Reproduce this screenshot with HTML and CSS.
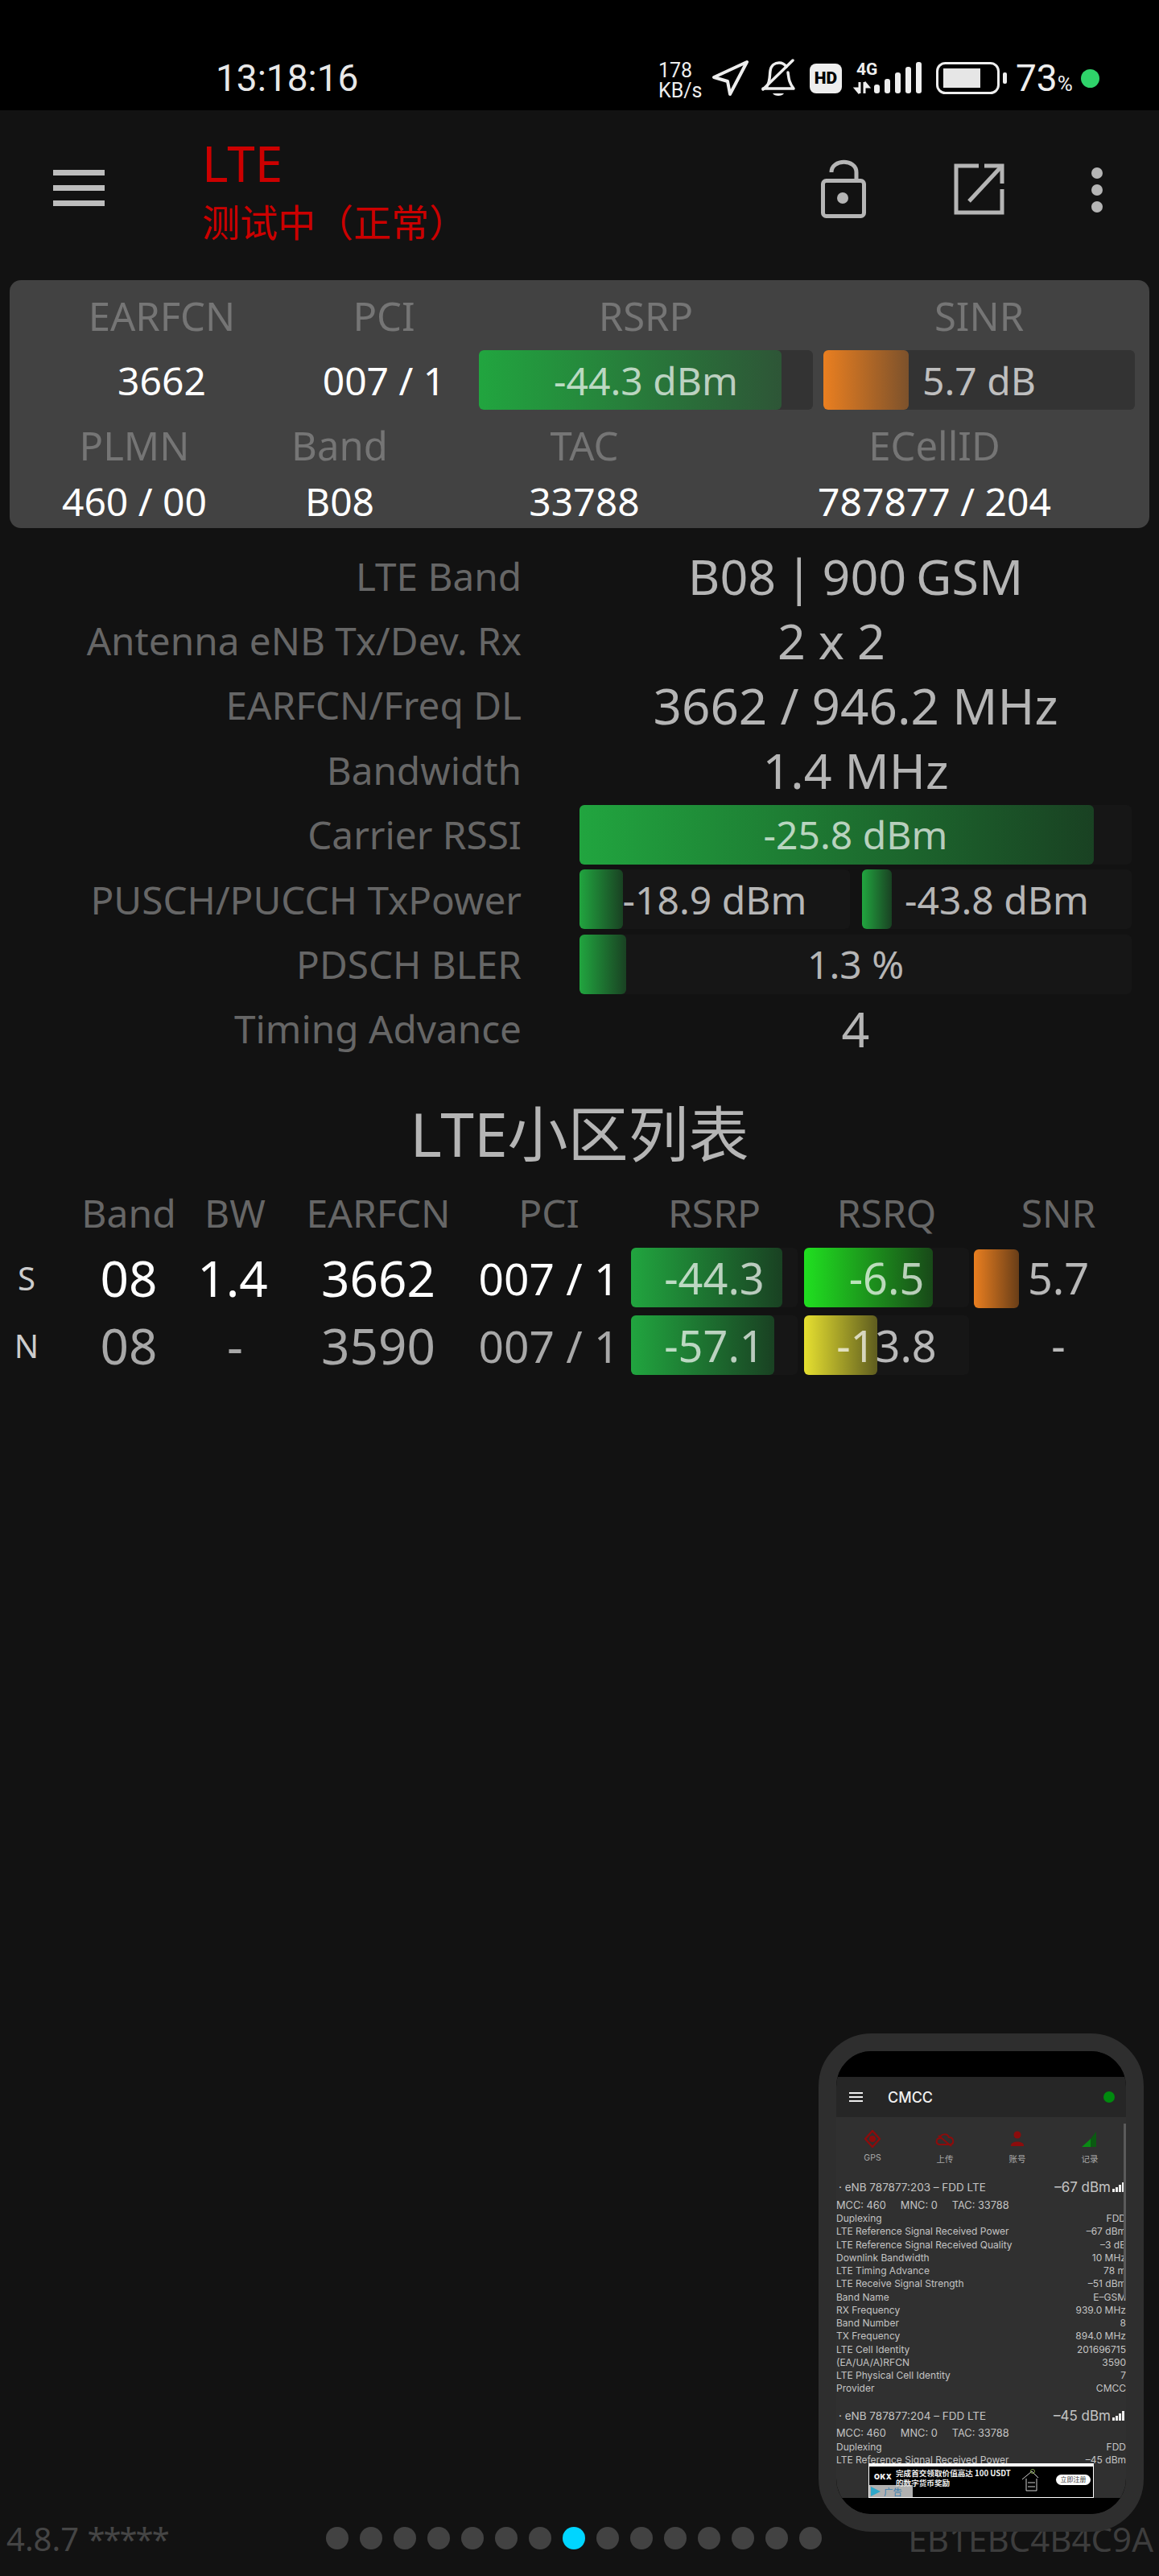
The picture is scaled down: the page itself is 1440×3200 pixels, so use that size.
FILE: index.html
```html
<!DOCTYPE html>
<html>

<head>
    <meta charset="utf-8">
    <title>LTE</title>
    <link rel="stylesheet" href="styles.css">
</head>

<body>
    <div class="page">
        <!-- status bar -->
        <div class="statusbar">
            <span class="clock">13:18:16</span>
            <div class="speed"><span>178</span><span>KB/s</span></div>
            <svg class="st-nav" width="46" height="46" viewBox="0 0 46 46">
                <path d="M44 3 L3 22 L20 27 L23 43 Z" fill="none" stroke="#eee" stroke-width="4" stroke-linejoin="round" />
            </svg>
            <svg class="st-bell" width="44" height="48" viewBox="0 0 44 48">
                <path d="M8 34 C12 28 11 22 12 15 C13 8 18 5 23 5 C27 5 30 7 32 10 M34 17 C35 24 35 29 41 37 H3" fill="none" stroke="#eee" stroke-width="3.5" stroke-linecap="round" stroke-linejoin="round" />
                <path d="M40 2 L3 38" stroke="#eee" stroke-width="3.5" stroke-linecap="round" />
                <path d="M15 43 H29 C27 47 17 47 15 43 Z" fill="#eee" />
            </svg>
            <span class="st-hd">HD</span>
            <svg class="st-signal" width="90" height="44" viewBox="0 0 90 44">
                <text x="4" y="18" class="st-4g">4G</text>
                <path d="M8 27 V41 M8 41 L3 35 H8 M14 41 V27 M14 27 L19 33 H14" fill="none" stroke="#eee" stroke-width="3" />
                <rect x="26" y="30" width="7" height="11" rx="3" fill="#eee" />
                <rect x="39" y="23" width="7" height="18" rx="3" fill="#eee" />
                <rect x="52" y="15" width="7" height="26" rx="3" fill="#eee" />
                <rect x="65" y="8" width="7" height="33" rx="3" fill="#eee" />
                <rect x="78" y="2" width="7" height="39" rx="3" fill="#eee" />
            </svg>
            <svg class="st-batt" width="88" height="40" viewBox="0 0 88 40">
                <rect x="1.5" y="1.5" width="76" height="37" rx="10" fill="none" stroke="#eee" stroke-width="3" />
                <rect x="9" y="8" width="46" height="24" fill="#e6e6e6" />
                <rect x="83" y="13" width="5" height="14" rx="2" fill="#eee" />
            </svg>
            <span class="st-pct">73<small>%</small></span>
            <span class="st-dot"></span>
        </div>

        <!-- app bar -->
        <div class="appbar">
            <div class="menu-btn"><i></i><i></i><i></i></div>
            <div class="app-title">
                <h1>LTE</h1>
                <p>测试中（正常）</p>
            </div>
            <svg class="act-lock" width="56" height="73" viewBox="0 0 56 73">
                <rect x="2.5" y="26.5" width="51" height="44" rx="4" fill="none" stroke="#b5b5b5" stroke-width="5" />
                <path d="M13 16 C13 -1 44 -1 44 16 V26" fill="none" stroke="#b5b5b5" stroke-width="5" />
                <ellipse cx="27" cy="48" rx="7" ry="7" fill="#b5b5b5" />
            </svg>
            <svg class="act-export" width="63" height="64" viewBox="0 0 63 64">
                <path d="M31 3 H3 V61 H60 V32" fill="none" stroke="#b5b5b5" stroke-width="5" />
                <path d="M38 3 H60 V25" fill="none" stroke="#b5b5b5" stroke-width="5" />
                <path d="M59 4 L19 47" fill="none" stroke="#b5b5b5" stroke-width="5" />
            </svg>
            <div class="more-btn"><i></i><i></i><i></i></div>
        </div>

        <!-- summary card -->
        <div class="card">
            <div class="card-row cols-a lab-row">
                <span>EARFCN</span><span>PCI</span><span>RSRP</span><span>SINR</span>
            </div>
            <div class="card-row cols-a val-row">
                <span>3662</span>
                <span>007 / 1</span>
                <div class="meter"><div class="fill f-green" style="width:90.6%"></div><span class="m-text">-44.3 dBm</span></div>
                <div class="meter"><div class="fill f-orange" style="width:27.4%"></div><span class="m-text">5.7 dB</span></div>
            </div>
            <div class="card-row cols-b lab-row2">
                <span>PLMN</span><span>Band</span><span>TAC</span><span>ECellID</span>
            </div>
            <div class="card-row cols-b val-row2">
                <span>460 / 00</span><span>B08</span><span>33788</span><span>787877 / 204</span>
            </div>
        </div>

        <!-- details -->
        <div class="details">
            <div class="d-label">LTE Band</div>
            <div class="d-value d-band">B08 | 900 GSM</div>
            <div class="d-label">Antenna eNB Tx/Dev. Rx</div>
            <div class="d-value d-antenna">2 x 2</div>
            <div class="d-label">EARFCN/Freq DL</div>
            <div class="d-value d-freq">3662 / 946.2 MHz</div>
            <div class="d-label">Bandwidth</div>
            <div class="d-value">1.4 MHz</div>
            <div class="d-label">Carrier RSSI</div>
            <div class="d-meter">
                <div class="meter dark"><div class="fill f-green" style="width:93.1%"></div><span class="m-text">-25.8 dBm</span></div>
            </div>
            <div class="d-label">PUSCH/PUCCH TxPower</div>
            <div class="d-meter two">
                <div class="meter dark"><div class="fill f-green" style="width:16%"></div><span class="m-text">-18.9 dBm</span></div>
                <div class="meter dark"><div class="fill f-green" style="width:11%"></div><span class="m-text">-43.8 dBm</span></div>
            </div>
            <div class="d-label">PDSCH BLER</div>
            <div class="d-meter">
                <div class="meter dark"><div class="fill f-green" style="width:8.4%"></div><span class="m-text">1.3 %</span></div>
            </div>
            <div class="d-label">Timing Advance</div>
            <div class="d-value">4</div>
        </div>

        <h2 class="list-title">LTE小区列表</h2>

        <!-- cell list -->
        <div class="cells">
            <div class="c-row c-head">
                <span></span><span>Band</span><span>BW</span><span>EARFCN</span><span>PCI</span>
                <span class="c-rsrp">RSRP</span><span class="c-rsrq">RSRQ</span><span>SNR</span>
            </div>
            <div class="c-row c-main">
                <span class="c-tag">S</span><span>08</span><span class="c-bw">1.4</span><span>3662</span><span class="c-pci">007 / 1</span>
                <div class="c-rsrp"><div class="meter dark"><div class="fill f-green" style="width:91%"></div><span class="m-text">-44.3</span></div></div>
                <div class="c-rsrq"><div class="meter dark"><div class="fill f-lime" style="width:78%"></div><span class="m-text">-6.5</span></div></div>
                <div class="c-snr"><div class="fill f-orange snr-fill"></div><span class="m-text">5.7</span></div>
            </div>
            <div class="c-row c-next">
                <span class="c-tag">N</span><span>08</span><span class="c-dash">-</span><span>3590</span><span class="c-pci">007 / 1</span>
                <div class="c-rsrp"><div class="meter dark"><div class="fill f-green" style="width:86%"></div><span class="m-text">-57.1</span></div></div>
                <div class="c-rsrq"><div class="meter dark"><div class="fill f-yellow" style="width:44.5%"></div><span class="m-text">-13.8</span></div></div>
                <div class="c-snr"><span class="m-text">-</span></div>
            </div>
        </div>

        <!-- footer -->
        <div class="footer">
            <span class="version">4.8.7 <span class="stars">*****</span></span>
            <div class="pager">
                <i></i><i></i><i></i><i></i><i></i><i></i><i></i><i class="on"></i><i></i><i></i><i></i><i></i><i></i><i></i><i></i>
            </div>
            <span class="device-id">EB1EBC4B4C9A</span>
        </div>

        <!-- floating preview window -->
        <div class="mini">
            <div class="mini-status"></div>
            <div class="mini-bar">
                <div class="mini-menu"><i></i><i></i><i></i></div>
                <span class="mini-name">CMCC</span>
                <span class="mini-dot"></span>
            </div>
            <div class="mini-body">
                <div class="mini-scroll"></div>
                <div class="mini-tools">
                    <div class="tool">
                        <svg width="22" height="24" viewBox="0 0 22 24">
                            <path d="M11 2 L20 12 L11 22 L2 12 Z" fill="none" stroke="#8c0c0c" stroke-width="2.4" stroke-linejoin="round" />
                            <circle cx="11" cy="12" r="4" fill="#8c0c0c" />
                        </svg>
                        <span>GPS</span>
                    </div>
                    <div class="tool">
                        <svg width="24" height="24" viewBox="0 0 24 24">
                            <path d="M5 19 C0 18 1 11 6 11 C7 5 15 5 17 10 C23 10 24 18 19 19 Z" fill="none" stroke="#8c0c0c" stroke-width="2" />
                            <path d="M4 8 L20 21" stroke="#8c0c0c" stroke-width="2" />
                        </svg>
                        <span>上传</span>
                    </div>
                    <div class="tool">
                        <svg width="22" height="24" viewBox="0 0 22 24">
                            <circle cx="11" cy="7" r="4.5" fill="#8c0c0c" />
                            <path d="M3 20 C3 14 19 14 19 20 V21 H3 Z" fill="#8c0c0c" />
                        </svg>
                        <span>账号</span>
                    </div>
                    <div class="tool">
                        <svg width="22" height="24" viewBox="0 0 22 24">
                            <path d="M1 22 L12 12 V22 Z" fill="#0a8a14" />
                            <path d="M12 12 L19 3 V22 H12 Z" fill="#0b5a12" />
                        </svg>
                        <span>记录</span>
                    </div>
                </div>

                <div class="mini-sec">
                    <div class="sec-head"><span>· eNB 787877:203 – FDD LTE</span><b>–67 dBm<em class="bars"><i></i><i></i><i></i><i></i></em></b></div>
                    <div class="sec-mcc"><span>MCC: 460</span><span>MNC: 0</span><span>TAC: 33788</span></div>
                    <div class="kv"><span>Duplexing</span><span>FDD</span></div>
                    <div class="kv"><span>LTE Reference Signal Received Power</span><span>–67 dBm</span></div>
                    <div class="kv"><span>LTE Reference Signal Received Quality</span><span>–3 dB</span></div>
                    <div class="kv"><span>Downlink Bandwidth</span><span>10 MHz</span></div>
                    <div class="kv"><span>LTE Timing Advance</span><span>78 m</span></div>
                    <div class="kv"><span>LTE Receive Signal Strength</span><span>–51 dBm</span></div>
                    <div class="kv"><span>Band Name</span><span>E–GSM</span></div>
                    <div class="kv"><span>RX Frequency</span><span>939.0 MHz</span></div>
                    <div class="kv"><span>Band Number</span><span>8</span></div>
                    <div class="kv"><span>TX Frequency</span><span>894.0 MHz</span></div>
                    <div class="kv"><span>LTE Cell Identity</span><span>201696715</span></div>
                    <div class="kv"><span>(EA/UA/A)RFCN</span><span>3590</span></div>
                    <div class="kv"><span>LTE Physical Cell Identity</span><span>7</span></div>
                    <div class="kv"><span>Provider</span><span>CMCC</span></div>
                </div>
                <div class="mini-sec">
                    <div class="sec-head"><span>· eNB 787877:204 – FDD LTE</span><b>–45 dBm<em class="bars"><i></i><i></i><i></i><i></i></em></b></div>
                    <div class="sec-mcc"><span>MCC: 460</span><span>MNC: 0</span><span>TAC: 33788</span></div>
                    <div class="kv"><span>Duplexing</span><span>FDD</span></div>
                    <div class="kv"><span>LTE Reference Signal Received Power</span><span>–45 dBm</span></div>
                </div>
            </div>
            <div class="mini-ad">
                <div class="ad-inner">
                    <b class="ad-logo">OKX</b>
                    <div class="ad-text">完成首交领取价值高达 100 USDT<br>的数字货币奖励</div>
                    <svg class="ad-art" width="22" height="28" viewBox="0 0 22 28">
                        <path d="M1 13 L13 3 L21 11 M6 12 V27 H19 V12 M8 17 H17 M8 22 H17" fill="none" stroke="#cfcfcf" stroke-width="1" />
                        <circle cx="14" cy="3" r="2.5" fill="none" stroke="#7fa04a" stroke-width="1" />
                    </svg>
                    <span class="ad-btn">立即注册</span>
                </div>
                <div class="ad-tag"><i></i><span>广告</span></div>
            </div>
            <div class="mini-foot"></div>
        </div>
    </div>
</body>
</html>
```

FILE: styles.css
```css
*{
	margin: 0;
	padding: 0;
	box-sizing: border-box;
}
body{
	background: #121212;
	font-family: "Noto Sans", "Noto Sans CJK SC", sans-serif;
	color: #b5b5b5;
}
i, em{
	font-style: normal;
}
.page{
	position: relative;
	width: 1440px;
	height: 3200px;
	display: flex;
	flex-direction: column;
	overflow: hidden;
}

/* status bar */
.statusbar{
	height: 137px;
	background: #000;
	padding: 57px 0 0 268px;
	display: flex;
	align-items: center;
	color: #eee;
	font-family: Roboto, sans-serif;
}
.clock{
	font-size: 46px;
	width: 550px;
	color: #e8e8e8;
}
.speed{
	width: 66px;
	font-size: 25px;
	line-height: 25px;
	display: flex;
	flex-direction: column;
	padding-top: 6px;
}
.st-nav{
	margin-right: 15px;
}
.st-bell{
	margin-right: 17px;
}
.st-hd{
	width: 40px;
	height: 37px;
	line-height: 37px;
	background: #eee;
	border-radius: 8px;
	color: #000;
	font-size: 21px;
	font-weight: 900;
	text-align: center;
	margin-right: 14px;
}
.st-signal{
	margin-right: 13px;
}
.st-4g{
	font-size: 21px;
	font-weight: 700;
	fill: #eee;
	font-family: Roboto, sans-serif;
}
.st-batt{
	margin-right: 11px;
}
.st-pct{
	font-size: 46px;
	width: 81px;
	white-space: nowrap;
}
.st-pct small{
	font-size: 26px;
}
.st-dot{
	width: 23px;
	height: 23px;
	border-radius: 50%;
	background: #2fd36a;
}

/* app bar */
.appbar{
	height: 198px;
	padding-left: 66px;
	display: flex;
	align-items: center;
}
.menu-btn{
	width: 64px;
	display: flex;
	flex-direction: column;
	gap: 12px;
	margin-top: -6px;
}
.menu-btn i{
	height: 7px;
	background: #bdbdbd;
}
.app-title{
	margin-left: 121px;
	width: 769px;
	color: #cc0000;
}
.app-title h1{
	font-size: 62px;
	line-height: 72px;
	font-weight: 400;
}
.app-title p{
	margin-top: 4px;
	font-size: 47px;
	line-height: 64px;
	font-family: "Noto Sans CJK SC", sans-serif;
}
.act-lock{
	margin-top: -4px;
}
.act-export{
	margin-left: 109px;
	margin-top: -2px;
}
.more-btn{
	margin-left: 108px;
	display: flex;
	flex-direction: column;
	gap: 7px;
}
.more-btn i{
	width: 14px;
	height: 14px;
	border-radius: 50%;
	background: #b5b5b5;
}

/* summary card */
.card{
	margin: 13px 12px 0;
	height: 308px;
	background: #424242;
	border-radius: 14px;
	padding: 0 18px 0 20px;
}
.card-row{
	display: grid;
	align-items: center;
	text-align: center;
}
.cols-a{
	grid-template-columns: 338px 214px 11px 415px 13px 387px;
}
.cols-b{
	grid-template-columns: 270px 240px 368px 502px;
}
.cols-a > :nth-child(3){
	grid-column: 4;
}
.cols-a > :nth-child(4){
	grid-column: 6;
}
.lab-row, .lab-row2{
	color: #757575;
	font-size: 49px;
}
.lab-row{
	height: 87px;
}
.val-row{
	height: 74px;
	color: #fff;
	font-size: 48px;
}
.lab-row2{
	height: 74px;
	margin-top: 7px;
}
.val-row2{
	height: 36px;
	color: #fff;
	font-size: 48px;
}

/* meters */
.meter{
	position: relative;
	height: 74px;
	background: #333;
	border-radius: 6px;
	display: flex;
	align-items: center;
	justify-content: center;
}
.meter.dark{
	background: #161616;
}
.fill{
	position: absolute;
	left: 0;
	top: 0;
	bottom: 0;
	border-radius: 6px;
}
.f-green{
	background: linear-gradient(to right, #21a53f, rgba(33, 165, 63, .3));
}
.f-orange{
	background: linear-gradient(to right, #ea7f20, rgba(234, 127, 32, .4));
}
.f-lime{
	background: linear-gradient(to right, #20e020, rgba(32, 224, 32, .25));
}
.f-yellow{
	background: linear-gradient(to right, #e6e030, rgba(230, 224, 48, .35));
}
.m-text{
	position: relative;
	color: rgba(255, 255, 255, .7);
	font-size: 48px;
}

/* details */
.details{
	margin-top: 19px;
	display: grid;
	grid-template-columns: 648px 686px;
	column-gap: 72px;
	grid-auto-rows: 80.4px;
	align-items: center;
}
.d-label{
	text-align: right;
	color: #666;
	font-size: 47.7px;
}
.d-value{
	text-align: center;
	font-size: 61px;
}
.d-band{
	word-spacing: -4px;
}
.d-freq{
	font-size: 62px;
}
.d-antenna{
	padding-right: 60px;
}
.d-meter{
	display: grid;
	grid-template-columns: 1fr;
}
.d-meter.two{
	grid-template-columns: 336px 335px;
	column-gap: 15px;
}

.list-title{
	margin-top: 40px;
	height: 100px;
	line-height: 100px;
	text-align: center;
	font-size: 75px;
	font-weight: 400;
	font-family: "Noto Sans", "Noto Sans CJK SC", sans-serif;
}

/* cell list */
.cells{
	margin-top: 9px;
}
.c-row{
	display: grid;
	grid-template-columns: 66px 188px 76px 280px 144px 237px 213px 222px;
	align-items: center;
	text-align: center;
	white-space: nowrap;
}
.c-head{
	height: 78px;
	color: #666;
	font-size: 48px;
}
.c-main, .c-next{
	height: 74px;
	font-size: 62px;
}
.c-main{
	color: #fff;
	margin-bottom: 10px;
}
.c-next{
	color: #a8a8a8;
}
.c-tag{
	font-size: 40px;
	color: #ccc;
}
.c-bw{
	justify-self: center;
	margin-right: 6px;
}
.c-pci{
	font-size: 55px;
	justify-self: center;
}
.c-rsrp{
	padding-left: 30px;
}
.c-rsrq{
	padding-left: 8px;
}
.c-row .m-text{
	font-size: 54px;
}
.c-snr{
	position: relative;
	height: 74px;
	display: flex;
	align-items: center;
	justify-content: center;
}
.snr-fill{
	left: 6px;
	top: 2px;
	bottom: auto;
	height: 73px;
	width: 56px;
}

/* footer */
.footer{
	margin-top: auto;
	height: 94px;
	padding: 0 7px 0 8px;
	display: flex;
	align-items: center;
}
.version{
	width: 397px;
	font-size: 40px;
	color: #454545;
}
.stars{
	letter-spacing: -2px;
}
.pager{
	display: flex;
	gap: 14px;
}
.pager i{
	width: 28px;
	height: 28px;
	border-radius: 50%;
	background: #424242;
}
.pager i.on{
	background: #00d5ff;
}
.device-id{
	margin-left: auto;
	font-size: 42px;
	color: #3d3d3d;
}

/* floating preview */
.mini{
	position: absolute;
	left: 1017px;
	top: 2526px;
	width: 404px;
	height: 619px;
	border: 22px solid #2e2e2e;
	border-radius: 66px;
	background: #000;
	overflow: hidden;
	display: flex;
	flex-direction: column;
	font-family: Inter, "Noto Sans CJK SC", sans-serif;
	color: #c4c4c4;
	font-size: 12.8px;
}
.mini-status{
	height: 32px;
	flex: none;
	background: #000;
}
.mini-bar{
	height: 50px;
	flex: none;
	background: #262626;
	display: flex;
	align-items: center;
	padding: 0 14px 0 16px;
	box-shadow: 0 2px 4px rgba(0, 0, 0, .2);
	position: relative;
}
.mini-menu{
	width: 17px;
	display: flex;
	flex-direction: column;
	gap: 3px;
}
.mini-menu i{
	height: 2px;
	background: #eee;
}
.mini-name{
	margin-left: 31px;
	font-size: 18px;
	font-weight: 500;
	color: #f2f2f2;
}
.mini-dot{
	margin-left: auto;
	width: 14px;
	height: 14px;
	border-radius: 50%;
	background: #008a0e;
}
.mini-body{
	flex: 1;
	min-height: 0;
	background: #303030;
	overflow: hidden;
	position: relative;
}
.mini-scroll{
	position: absolute;
	right: 0;
	top: 8px;
	width: 3px;
	height: 217px;
	background: #5a5a5a;
}
.mini-tools{
	display: grid;
	grid-template-columns: repeat(4, 90px);
	height: 74px;
	padding-top: 15px;
	text-align: center;
	font-size: 10.5px;
	color: #aaa;
}
.tool{
	display: flex;
	flex-direction: column;
	align-items: center;
	gap: 5px;
}
.mini-sec{
	margin-bottom: 12px;
}
.sec-head{
	height: 26px;
	display: flex;
	align-items: center;
	justify-content: space-between;
	padding-left: 3px;
	font-size: 13.5px;
}
.sec-head b{
	font-size: 17px;
	font-weight: 400;
	display: flex;
	align-items: center;
	gap: 2px;
	padding-right: 2px;
}
.bars{
	display: flex;
	align-items: flex-end;
	gap: 1px;
	height: 12px;
}
.bars i{
	width: 3px;
	background: #eee;
}
.bars i:nth-child(1){ height: 4px; }
.bars i:nth-child(2){ height: 6px; }
.bars i:nth-child(3){ height: 9px; }
.bars i:nth-child(4){ height: 12px; }
.sec-mcc{
	height: 18px;
	display: flex;
	gap: 18px;
	align-items: center;
}
.kv{
	height: 16.25px;
	line-height: 16.25px;
	display: flex;
	justify-content: space-between;
	font-size: 12px;
}
.mini-ad{
	height: 43px;
	flex: none;
	background: #303030;
	position: relative;
}
.ad-inner{
	margin-left: 40px;
	width: 280px;
	height: 43px;
	background: #000;
	border: solid #fff;
	border-width: 4px 1px 1px;
	display: flex;
	align-items: center;
	color: #f0f0f0;
	overflow: hidden;
}
.ad-logo{
	margin-left: 6px;
	font-size: 9px;
	font-weight: 900;
	width: 27px;
	margin-top: -14px;
	letter-spacing: .5px;
}
.ad-text{
	width: 156px;
	font-size: 9.6px;
	line-height: 12px;
	font-weight: 700;
	height: 34px;
	font-family: "Noto Sans CJK SC", sans-serif;
}
.ad-art{
	margin-top: -4px;
}
.ad-btn{
	margin-left: 21px;
	width: 43px;
	height: 13px;
	line-height: 13px;
	border-radius: 7px;
	background: #fff;
	color: #333;
	font-size: 8px;
	text-align: center;
	margin-top: -6px;
}
.ad-tag{
	position: absolute;
	left: 41px;
	bottom: 1px;
	width: 54px;
	height: 15px;
	background: rgba(220, 220, 220, .8);
	display: flex;
	align-items: center;
	gap: 4px;
	font-size: 11.5px;
	color: #3b7fb0;
}
.ad-tag i{
	width: 0;
	height: 0;
	border-left: 12px solid #2fa7c9;
	border-top: 6px solid transparent;
	border-bottom: 6px solid transparent;
	margin-left: 2px;
}
.mini-foot{
	height: 20px;
	flex: none;
	background: #000;
}
```
